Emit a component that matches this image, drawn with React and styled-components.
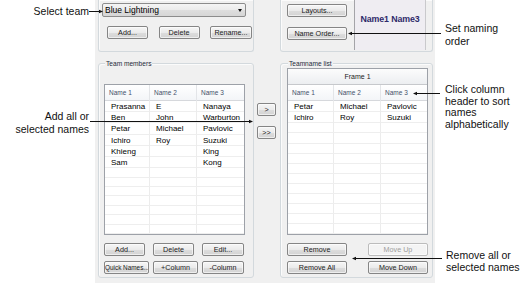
import React from 'react';
import styled, { createGlobalStyle } from 'styled-components';

const Global = createGlobalStyle`
  html, body { margin: 0; padding: 0; background: #fff; }
  body { font-family: "Liberation Sans", Arial, sans-serif; color: #000; }
`;

const Page = styled.div`
  position: relative;
  width: 532px;
  height: 295px;
  overflow: hidden;
  display: flex;
  align-items: flex-start;
`;

const Dialog = styled.div`
  margin-left: 95px;
  width: 340px;
  height: 283px;
  box-sizing: border-box;
  background: #f0f0f0;
  padding: 0 2px 0 3px;
  display: grid;
  grid-template-columns: 156px 26px 153px;
  grid-template-rows: 52px 231px;
`;

const Group = styled.div`
  box-sizing: border-box;
  border: 1px solid #d3d9dd;
  border-radius: 3px;
  box-shadow: inset 1px 1px 0 #fbfbfb;
  display: flex;
  flex-direction: column;
  ${(p) => p.$open && 'border-top: none; border-radius: 0 0 3px 3px;'}
  ${(p) => p.$lower && 'margin-top: 11px; height: 215px;'}
  padding: ${(p) => p.$pad || '0'};
`;

const TopRight = styled(Group)`
  flex-direction: row;
  align-items: flex-start;
  padding: 0 6px 0 6px;
`;

const Legend = styled.div`
  align-self: flex-start;
  margin: -5px 0 0 1px;
  padding: 0 1px;
  height: 9px;
  line-height: 9px;
  font-size: 6.6px;
  color: #1e2a3a;
  background: #f0f0f0;
`;

const Combo = styled.div`
  box-sizing: border-box;
  margin-top: 3px;
  width: 144px;
  height: 14px;
  border: 1px solid #8c8c8c;
  border-radius: 2px;
  background: linear-gradient(#f5f5f5, #ebebeb 50%, #dedede 51%, #d6d6d6);
  display: flex;
  align-items: center;
  justify-content: space-between;
  padding: 0 3px 0 2px;
  font-size: 8.5px;
`;

const Caret = styled.span`
  width: 0;
  height: 0;
  border-left: 2.5px solid transparent;
  border-right: 2.5px solid transparent;
  border-top: 3px solid #111;
`;

const BtnRow = styled.div`
  display: flex;
  justify-content: space-between;
  margin-top: ${(p) => p.$mt || 0}px;
  padding-left: ${(p) => p.$pl || 0}px;
  width: ${(p) => p.$w}px;
`;

const BtnCol = styled.div`
  display: flex;
  flex-direction: column;
  gap: 10px;
  padding-top: 4px;
`;

const Btn = styled.button`
  box-sizing: border-box;
  width: ${(p) => p.$w}px;
  height: 13px;
  padding: 0;
  border: 1px solid ${(p) => (p.disabled ? '#bcbcbc' : '#858585')};
  border-radius: 2px;
  background: ${(p) =>
    p.disabled
      ? '#f4f4f4'
      : 'linear-gradient(#f6f6f6, #ebebeb 50%, #dddddd 51%, #d3d3d3)'};
  box-shadow: inset 0 0 0 1px rgba(255, 255, 255, 0.6);
  font-family: "Liberation Sans", Arial, sans-serif;
  font-size: ${(p) => p.$fs || 7.2}px;
  line-height: 11px;
  white-space: nowrap;
  overflow: hidden;
  color: ${(p) => (p.disabled ? '#9d9d9d' : '#1a1a1a')};
`;

const Preview = styled.div`
  box-sizing: border-box;
  margin-left: 7px;
  width: 72px;
  height: 50px;
  background: #efedf2;
  border-left: 1px solid #a4a4a8;
  border-right: 1px solid #c9c9cc;
  text-align: center;
  padding-top: 14px;
  font-size: 8.8px;
  font-weight: bold;
  letter-spacing: -0.1px;
  color: #2e2a6a;
  white-space: nowrap;
`;

const Middle = styled.div`
  display: flex;
  flex-direction: column;
  padding: 51px 0 0 3px;
  gap: 10px;
`;

const Table = styled.div`
  box-sizing: border-box;
  margin-top: ${(p) => p.$mt}px;
  height: ${(p) => p.$h}px;
  border: 1px solid #9da1a8;
  background: #fff;
  display: flex;
  flex-direction: column;
  overflow: hidden;
`;

const FrameHead = styled.div`
  box-sizing: border-box;
  height: 16px;
  border-bottom: 1px solid #c6c8cc;
  background: linear-gradient(#fcfcfc, #eceef1);
  text-align: center;
  font-size: 7px;
  line-height: 15px;
  color: #222;
`;

const Grid = styled.div`
  display: grid;
  grid-template-columns: ${(p) => p.$cols};
`;

const HeadRow = styled(Grid)`
  box-sizing: border-box;
  height: 16px;
  border-bottom: 1px solid #d6d8dc;
  background: linear-gradient(#ffffff, #f3f5f8);
`;

const HeadCell = styled.div`
  border-right: 1px solid #e3e5e8;
  padding-left: 4px;
  font-size: 6.5px;
  line-height: 16px;
  color: #44506a;
  &:last-child { border-right: none; }
`;

const Row = styled(Grid)`
  box-sizing: border-box;
  height: 11.2px;
  border-bottom: 1px solid #eeeeee;
`;

const Cell = styled.div`
  border-right: 1px solid #ececec;
  padding-left: 6px;
  font-size: 8px;
  line-height: 11px;
  white-space: nowrap;
  &:last-child { border-right: none; }
`;

const Note = styled.div`
  position: absolute;
  left: ${(p) => p.$x}px;
  top: ${(p) => p.$y}px;
  width: ${(p) => (p.$w ? `${p.$w}px` : 'auto')};
  text-align: ${(p) => p.$align || 'left'};
  font-family: "Liberation Sans", Arial, sans-serif;
  font-size: 10.5px;
  line-height: ${(p) => p.$lh || 13}px;
  color: #111;
  white-space: nowrap;
`;

const Overlay = styled.svg`
  position: absolute;
  left: 0;
  top: 0;
  pointer-events: none;
`;

const leftRows = [
  ['Prasanna', 'E', 'Nanaya'],
  ['Ben', 'John', 'Warburton'],
  ['Petar', 'Michael', 'Pavlovic'],
  ['Ichiro', 'Roy', 'Suzuki'],
  ['Khieng', '', 'King'],
  ['Sam', '', 'Kong'],
];
const rightRows = [
  ['Petar', 'Michael', 'Pavlovic'],
  ['Ichiro', 'Roy', 'Suzuki'],
];

function NameTable({ rows, cols, frame, h, mt }) {
  const all = [...rows];
  while (all.length < 13) all.push(['', '', '']);
  return (
    <Table $h={h} $mt={mt}>
      {frame && <FrameHead>Frame 1</FrameHead>}
      <HeadRow $cols={cols}>
        <HeadCell>Name 1</HeadCell>
        <HeadCell>Name 2</HeadCell>
        <HeadCell>Name 3</HeadCell>
      </HeadRow>
      {all.map((r, i) => (
        <Row key={i} $cols={cols}>
          {r.map((c, j) => (
            <Cell key={j}>{c}</Cell>
          ))}
        </Row>
      ))}
    </Table>
  );
}

function ArrowR({ x1, x2, y }) {
  return (
    <g>
      <line x1={x1} y1={y} x2={x2 - 3} y2={y} stroke="#111" strokeWidth="1" />
      <polygon points={`${x2},${y} ${x2 - 4},${y - 1.8} ${x2 - 4},${y + 1.8}`} fill="#111" />
    </g>
  );
}

function ArrowL({ x1, x2, y }) {
  return (
    <g>
      <line x1={x1 + 3} y1={y} x2={x2} y2={y} stroke="#111" strokeWidth="1" />
      <polygon points={`${x1},${y} ${x1 + 4},${y - 1.8} ${x1 + 4},${y + 1.8}`} fill="#111" />
    </g>
  );
}

export default function App() {
  return (
    <Page>
      <Global />
      <Dialog>
        <Group $open $pad="0 0 0 3px">
          <Combo>
            <span>Blue Lightning</span>
            <Caret />
          </Combo>
          <BtnRow $mt={9} $pl={5} $w={145}>
            <Btn $w={41}>Add...</Btn>
            <Btn $w={41}>Delete</Btn>
            <Btn $w={42}>Rename...</Btn>
          </BtnRow>
        </Group>
        <div />
        <TopRight $open>
          <BtnCol>
            <Btn $w={60}>Layouts...</Btn>
            <Btn $w={60}>Name Order...</Btn>
          </BtnCol>
          <Preview>Name1 Name3</Preview>
        </TopRight>

        <Group $lower $pad="0 8px 0 5px">
          <Legend>Team members</Legend>
          <NameTable rows={leftRows} cols="45px 47px 1fr" h={151} mt={16} />
          <BtnRow $mt={8} $w={140}>
            <Btn $w={41}>Add...</Btn>
            <Btn $w={41}>Delete</Btn>
            <Btn $w={42}>Edit...</Btn>
          </BtnRow>
          <BtnRow $mt={5} $w={140}>
            <Btn $w={45} $fs={6.4}>Quick Names...</Btn>
            <Btn $w={45}>+Column</Btn>
            <Btn $w={42}>-Column</Btn>
          </BtnRow>
        </Group>
        <Middle>
          <Btn $w={19}>&gt;</Btn>
          <Btn $w={19}>&gt;&gt;</Btn>
        </Middle>
        <Group $lower $pad="0 4px 0 6px">
          <Legend>Teamname list</Legend>
          <NameTable rows={rightRows} cols="46px 47px 1fr" frame h={167} mt={0} />
          <BtnRow $mt={8} $w={141}>
            <Btn $w={60}>Remove</Btn>
            <Btn $w={60} disabled>Move Up</Btn>
          </BtnRow>
          <BtnRow $mt={5} $w={141}>
            <Btn $w={60}>Remove All</Btn>
            <Btn $w={60}>Move Down</Btn>
          </BtnRow>
        </Group>
      </Dialog>

      <Overlay width="532" height="295" viewBox="0 0 532 295">
        <ArrowR x1={89} x2={103} y={11.5} />
        <ArrowL x1={348} x2={441} y={33.5} />
        <ArrowR x1={90} x2={253} y={121.5} />
        <ArrowL x1={413} x2={440} y={93.5} />
        <ArrowL x1={352} x2={442} y={258.5} />
      </Overlay>

      <Note $x={0} $y={5} $w={89} $align="right" $lh={12}>Select team</Note>
      <Note $x={0} $y={110} $w={89} $align="right">
        Add all or
        <br />
        selected names
      </Note>
      <Note $x={445} $y={22}>
        Set naming
        <br />
        order
      </Note>
      <Note $x={445} $y={84} $lh={11.7}>
        Click column
        <br />
        header to sort
        <br />
        names
        <br />
        alphabetically
      </Note>
      <Note $x={446} $y={249} $lh={12}>
        Remove all or
        <br />
        selected names
      </Note>
    </Page>
  );
}
